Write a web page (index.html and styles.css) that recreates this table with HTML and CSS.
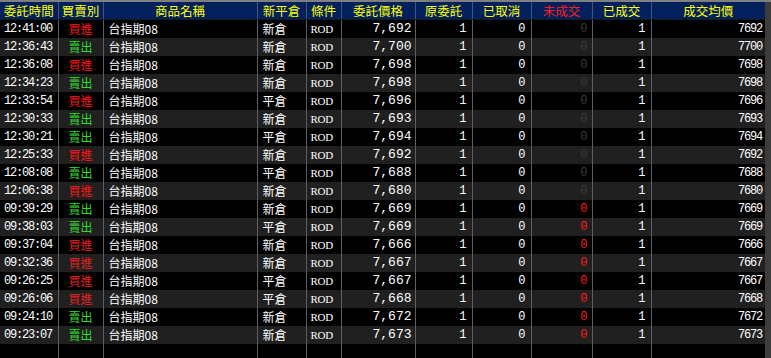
FILE: index.html
```html
<!DOCTYPE html>
<html>
<head>
<meta charset="utf-8">
<link rel="stylesheet" href="styles.css">
</head>
<body>
<div class="frame">
<table class="orders">
<colgroup>
<col class="c1"><col class="c2"><col class="c3"><col class="c4"><col class="c5"><col class="c6"><col class="c7"><col class="c8"><col class="c9"><col class="c10"><col class="c11">
</colgroup>
<thead>
<tr><th>委託時間</th><th>買賣別</th><th>商品名稱</th><th>新平倉</th><th>條件</th><th>委託價格</th><th>原委託</th><th>已取消</th><th class="hred">未成交</th><th>已成交</th><th>成交均價</th></tr>
</thead>
<tbody>
<tr><td class="tm">12:41:00</td><td class="buy">買進</td><td class="nm">台指期08</td><td class="oc">新倉</td><td class="cd">ROD</td><td class="pr">7,692</td><td class="n">1</td><td class="n">0</td><td class="z dim">0</td><td class="n">1</td><td class="avg">7692</td></tr>
<tr><td class="tm">12:36:43</td><td class="sell">賣出</td><td class="nm">台指期08</td><td class="oc">新倉</td><td class="cd">ROD</td><td class="pr">7,700</td><td class="n">1</td><td class="n">0</td><td class="z dim">0</td><td class="n">1</td><td class="avg">7700</td></tr>
<tr><td class="tm">12:36:08</td><td class="buy">買進</td><td class="nm">台指期08</td><td class="oc">新倉</td><td class="cd">ROD</td><td class="pr">7,698</td><td class="n">1</td><td class="n">0</td><td class="z dim">0</td><td class="n">1</td><td class="avg">7698</td></tr>
<tr><td class="tm">12:34:23</td><td class="sell">賣出</td><td class="nm">台指期08</td><td class="oc">新倉</td><td class="cd">ROD</td><td class="pr">7,698</td><td class="n">1</td><td class="n">0</td><td class="z dim">0</td><td class="n">1</td><td class="avg">7698</td></tr>
<tr><td class="tm">12:33:54</td><td class="buy">買進</td><td class="nm">台指期08</td><td class="oc">平倉</td><td class="cd">ROD</td><td class="pr">7,696</td><td class="n">1</td><td class="n">0</td><td class="z dim">0</td><td class="n">1</td><td class="avg">7696</td></tr>
<tr><td class="tm">12:30:33</td><td class="sell">賣出</td><td class="nm">台指期08</td><td class="oc">新倉</td><td class="cd">ROD</td><td class="pr">7,693</td><td class="n">1</td><td class="n">0</td><td class="z dim">0</td><td class="n">1</td><td class="avg">7693</td></tr>
<tr><td class="tm">12:30:21</td><td class="sell">賣出</td><td class="nm">台指期08</td><td class="oc">平倉</td><td class="cd">ROD</td><td class="pr">7,694</td><td class="n">1</td><td class="n">0</td><td class="z dim">0</td><td class="n">1</td><td class="avg">7694</td></tr>
<tr><td class="tm">12:25:33</td><td class="buy">買進</td><td class="nm">台指期08</td><td class="oc">新倉</td><td class="cd">ROD</td><td class="pr">7,692</td><td class="n">1</td><td class="n">0</td><td class="z dim">0</td><td class="n">1</td><td class="avg">7692</td></tr>
<tr><td class="tm">12:08:08</td><td class="sell">賣出</td><td class="nm">台指期08</td><td class="oc">平倉</td><td class="cd">ROD</td><td class="pr">7,688</td><td class="n">1</td><td class="n">0</td><td class="z dim">0</td><td class="n">1</td><td class="avg">7688</td></tr>
<tr><td class="tm">12:06:38</td><td class="buy">買進</td><td class="nm">台指期08</td><td class="oc">新倉</td><td class="cd">ROD</td><td class="pr">7,680</td><td class="n">1</td><td class="n">0</td><td class="z dim">0</td><td class="n">1</td><td class="avg">7680</td></tr>
<tr><td class="tm">09:39:29</td><td class="sell">賣出</td><td class="nm">台指期08</td><td class="oc">新倉</td><td class="cd">ROD</td><td class="pr">7,669</td><td class="n">1</td><td class="n">0</td><td class="z red">0</td><td class="n">1</td><td class="avg">7669</td></tr>
<tr><td class="tm">09:38:03</td><td class="sell">賣出</td><td class="nm">台指期08</td><td class="oc">平倉</td><td class="cd">ROD</td><td class="pr">7,669</td><td class="n">1</td><td class="n">0</td><td class="z red">0</td><td class="n">1</td><td class="avg">7669</td></tr>
<tr><td class="tm">09:37:04</td><td class="buy alt">買進</td><td class="nm">台指期08</td><td class="oc">新倉</td><td class="cd">ROD</td><td class="pr">7,666</td><td class="n">1</td><td class="n">0</td><td class="z red">0</td><td class="n">1</td><td class="avg">7666</td></tr>
<tr><td class="tm">09:32:36</td><td class="buy alt">買進</td><td class="nm">台指期08</td><td class="oc">新倉</td><td class="cd">ROD</td><td class="pr">7,667</td><td class="n">1</td><td class="n">0</td><td class="z red">0</td><td class="n">1</td><td class="avg">7667</td></tr>
<tr><td class="tm">09:26:25</td><td class="buy alt">買進</td><td class="nm">台指期08</td><td class="oc">平倉</td><td class="cd">ROD</td><td class="pr">7,667</td><td class="n">1</td><td class="n">0</td><td class="z red">0</td><td class="n">1</td><td class="avg">7667</td></tr>
<tr><td class="tm">09:26:06</td><td class="buy alt">買進</td><td class="nm">台指期08</td><td class="oc">平倉</td><td class="cd">ROD</td><td class="pr">7,668</td><td class="n">1</td><td class="n">0</td><td class="z red">0</td><td class="n">1</td><td class="avg">7668</td></tr>
<tr><td class="tm">09:24:10</td><td class="sell">賣出</td><td class="nm">台指期08</td><td class="oc">新倉</td><td class="cd">ROD</td><td class="pr">7,672</td><td class="n">1</td><td class="n">0</td><td class="z red">0</td><td class="n">1</td><td class="avg">7672</td></tr>
<tr><td class="tm">09:23:07</td><td class="sell">賣出</td><td class="nm">台指期08</td><td class="oc">新倉</td><td class="cd">ROD</td><td class="pr">7,673</td><td class="n">1</td><td class="n">0</td><td class="z red">0</td><td class="n">1</td><td class="avg">7673</td></tr>
<tr class="filler"><td></td><td></td><td></td><td></td><td></td><td></td><td></td><td></td><td></td><td></td><td></td></tr>
</tbody>
</table>
<div class="edge"></div>
</div>
</body>
</html>
```
FILE: styles.css
```css
html, body {
  margin: 0;
  padding: 0;
  background: #000;
  overflow: hidden;
}
.frame {
  display: flex;
  width: 771px;
  height: 358px;
  overflow: hidden;
}
.edge {
  width: 6px;
  flex: none;
  background: #3c3c3c;
  border-top: 2px solid #7f7f7f;
  box-sizing: border-box;
}
.orders {
  width: 765px;
  flex: none;
  table-layout: fixed;
  border-collapse: collapse;
  border-spacing: 0;
  font-family: "Noto Sans CJK TC", "Liberation Sans", sans-serif;
  font-size: 12px;
  color: #fff;
}
.c1 { width: 58px; }
.c2 { width: 45px; }
.c3 { width: 154px; }
.c4 { width: 49px; }
.c5 { width: 35px; }
.c6 { width: 74px; }
.c7 { width: 57px; }
.c8 { width: 59px; }
.c9 { width: 61px; }
.c10 { width: 59px; }
.c11 { width: 114px; }

.orders th {
  height: 17px;
  padding: 0;
  background: #02215c;
  color: #ffff00;
  font-weight: normal;
  font-size: 12.5px;
  line-height: 17px;
  text-align: center;
  border-top: 2px solid #7f7f7f;
  border-bottom: 1px solid #1a1a1a;
  border-left: 1px solid #46557a;
  white-space: nowrap;
  overflow: hidden;
}
.orders th:first-child { border-left: none; }
.orders th.hred { color: #ff1a1a; }

.orders td {
  height: 18px;
  padding: 0;
  line-height: 18px;
  border-left: 1px solid #5f5f5f;
  white-space: nowrap;
  overflow: hidden;
  vertical-align: middle;
}
.orders td:first-child { border-left: none; }
.orders tbody tr:nth-child(even) td { background: #202020; }
.orders tbody tr.filler td { height: 14px; background: #000; }

.tm {
  padding-left: 4px !important;
  font-family: "Liberation Mono", monospace;
  font-size: 12px;
  letter-spacing: -1.2px;
}
.buy, .sell { text-align: center; }
.buy { color: #ff1414; }
.buy.alt { color: #e82020; }
.sell { color: #2fdc2f; }
.nm { padding-left: 5px !important; }
.oc { padding-left: 5px !important; }
.cd {
  padding-left: 4px !important;
  font-family: "Liberation Serif", serif;
  font-size: 11px;
  letter-spacing: -0.3px;
}
.pr {
  text-align: right;
  padding-right: 3px !important;
  font-family: "Liberation Mono", monospace;
  font-size: 13px;
}
.n, .z {
  text-align: right;
  padding-right: 5px !important;
  font-family: "Liberation Mono", monospace;
  font-size: 12px;
}
.z { padding-right: 4px !important; }
.z.dim { color: #3a3a3a; }
.z.red { color: #ff1a1a; }
.avg {
  text-align: right;
  padding-right: 3px !important;
  font-family: "Liberation Mono", monospace;
  font-size: 12px;
  letter-spacing: -1.2px;
}
```
